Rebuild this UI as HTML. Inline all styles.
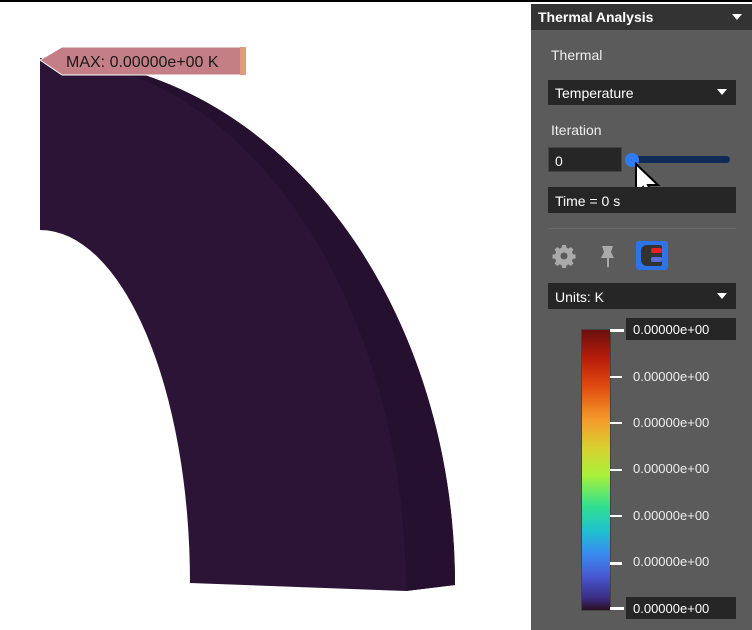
<!DOCTYPE html>
<html><head><meta charset="utf-8"><style>
body{margin:0;width:752px;height:630px;overflow:hidden;background:#fff;font-family:"Liberation Sans",sans-serif;position:relative}
.p{position:absolute}
.panel{left:531px;top:4px;width:221px;height:626px;background:#5b5b5b}
.hdr{left:531px;top:4px;width:221px;height:26px;background:#333;color:#fff;font-size:14px;font-weight:bold}
.box{background:#262626;color:#fff;font-size:14px}
.lbl{color:#eee;font-size:14px}
.tick{width:12px;height:2px;background:#fff}
.val{color:#eee;font-size:13px}
</style></head><body>
<div class="p" style="left:0;top:0;width:752px;height:2px;background:#000"></div>
<svg class="p" style="left:0;top:0" width="531" height="630">
<path d="M40 58 A415 527 0 0 1 455 585 L406 591 L190 583 A150 353 0 0 0 40 230 Z" fill="#2b1436"/>
<path d="M40 58 A415 527 0 0 1 455 585 L406 591 A366 533 0 0 0 40 58 Z" fill="#25102f"/>
<path d="M40 60 L62 47 L246 47 L246 75 L62 75 Z" fill="#c47f86" stroke="#fff" stroke-width="1"/>
<rect x="240" y="47" width="6" height="28" fill="#e09a80"/>
<text x="66" y="67" font-family="Liberation Sans" font-size="16" fill="#1a1a1a">MAX: 0.00000e+00 K</text>
</svg>
<div class="p panel"></div>
<div class="p hdr"><span style="position:absolute;left:7px;top:5px">Thermal Analysis</span><span style="position:absolute;right:10px;top:10px;border:5px solid transparent;border-top:6px solid #fff"></span></div>
<div class="p lbl" style="left:551px;top:47px">Thermal</div>
<div class="p box" style="left:548px;top:80px;width:188px;height:25px"><span style="position:absolute;left:7px;top:5px">Temperature</span><span style="position:absolute;right:9px;top:9px;border:5px solid transparent;border-top:6px solid #fff"></span></div>
<div class="p lbl" style="left:551px;top:122px">Iteration</div>
<div class="p box" style="left:548px;top:147px;width:74px;height:25px;border:1px solid #444;box-sizing:border-box"><span style="position:absolute;left:6px;top:5px">0</span></div>
<div class="p" style="left:632px;top:156px;width:98px;height:7px;background:#0f2a55;border-radius:4px"></div>
<div class="p" style="left:625px;top:153px;width:14px;height:14px;background:#2f7cf0;border-radius:50%"></div>
<svg class="p" style="left:632px;top:160px" width="32" height="46"><path d="M4 4 L4 34 L11 27 L16 39 L21 37 L16 25 L26 25 Z" fill="#fff" stroke="#000" stroke-width="2"/></svg>
<div class="p box" style="left:548px;top:187px;width:188px;height:26px"><span style="position:absolute;left:7px;top:6px">Time = 0 s</span></div>
<div class="p" style="left:548px;top:228px;width:188px;height:1px;background:#6a6a6a"></div>
<svg class="p" style="left:552px;top:244px" width="24" height="24" viewBox="0 0 24 24"><path fill="#aaa" d="M10 1h4l.6 3 2.3 1 2.6-1.7 2.8 2.8L20.6 8.7l1 2.3 3 .6v4l-3 .6-1 2.3 1.7 2.6-2.8 2.8-2.6-1.7-2.3 1-.6 3h-4l-.6-3-2.3-1-2.6 1.7-2.8-2.8 1.7-2.6-1-2.3-3-.6v-4l3-.6 1-2.3L1.7 6.1 4.5 3.3 7.1 5l2.3-1z" transform="translate(1 0) scale(0.92)"/><circle cx="12" cy="12" r="3.5" fill="#5b5b5b"/></svg>
<svg class="p" style="left:598px;top:244px" width="20" height="26"><path d="M4 2 H15 L13 8 L16 14 H11 V22 L10 24 L9 22 V14 H3 L6 8 Z" fill="#aaa"/></svg>
<div class="p" style="left:636px;top:241px;width:32px;height:29px;background:#2d74e8;border-radius:3px"><div style="position:absolute;left:5px;top:4px;width:21px;height:21px;background:#333;border-radius:6px 2px 2px 6px"></div><div style="position:absolute;left:15px;top:7px;width:11px;height:5px;background:#e8201e;border-radius:2px"></div><div style="position:absolute;left:15px;top:16px;width:11px;height:5px;background:#5b6ed8;border-radius:2px"></div></div>
<div class="p box" style="left:548px;top:283px;width:188px;height:26px"><span style="position:absolute;left:7px;top:6px">Units: K</span><span style="position:absolute;right:9px;top:10px;border:5px solid transparent;border-top:6px solid #fff"></span></div>
<div class="p" style="left:581px;top:329px;width:28px;height:280px;background:linear-gradient(to bottom,#6b0f0f,#b71c0a 10%,#e04a10 20%,#f59a2a 32%,#d8d030 42%,#a8f03a 52%,#30e090 63%,#20c0d0 72%,#3a8af0 80%,#4858d0 88%,#3a2a80 96%,#2a0f20);border:1px solid #444"></div>
<div class="p box" style="left:626px;top:318px;width:110px;height:22px"></div>
<div class="p box" style="left:626px;top:597px;width:110px;height:22px"></div>
<div class="p tick" style="left:610px;top:329px;width:14px;height:3px"></div>
<div class="p tick" style="left:610px;top:376px"></div>
<div class="p tick" style="left:610px;top:422px"></div>
<div class="p tick" style="left:610px;top:469px"></div>
<div class="p tick" style="left:610px;top:515px"></div>
<div class="p tick" style="left:610px;top:562px;height:3px"></div>
<div class="p tick" style="left:610px;top:607px;width:14px;height:3px"></div>
<div class="p val" style="left:633px;top:322px;color:#fff">0.00000e+00</div>
<div class="p val" style="left:633px;top:369px">0.00000e+00</div>
<div class="p val" style="left:633px;top:415px">0.00000e+00</div>
<div class="p val" style="left:633px;top:461px">0.00000e+00</div>
<div class="p val" style="left:633px;top:508px">0.00000e+00</div>
<div class="p val" style="left:633px;top:554px">0.00000e+00</div>
<div class="p val" style="left:633px;top:601px;color:#fff">0.00000e+00</div>
</body></html>
